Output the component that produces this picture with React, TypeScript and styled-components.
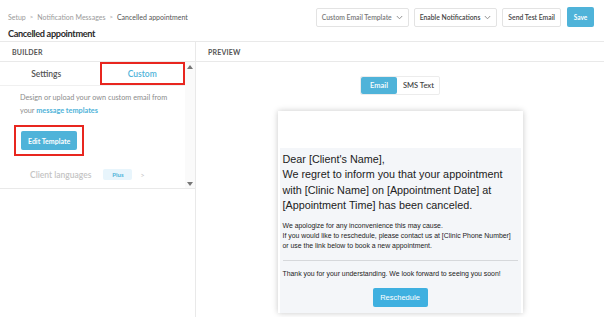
import React from "react";
import styled, { createGlobalStyle } from "styled-components";

const GlobalStyle = createGlobalStyle`
  html, body {
    margin: 0;
    padding: 0;
    height: 100%;
    overflow: hidden;
    background: #fff;
  }
  body {
    font-family: Lato, "Open Sans", sans-serif;
    color: #333;
  }
  #root {
    height: 100vh;
    display: flex;
    flex-direction: column;
  }
`;

const BLUE = "#4fb3d9";
const RED = "#e8261f";
const LINE = "#e9e9e9";

const Chevron = () => (
  <svg width="7" height="5" viewBox="0 0 7 5">
    <path d="M0.8 1 L3.5 3.8 L6.2 1" fill="none" stroke="#888" strokeWidth="0.9" />
  </svg>
);

export default function App() {
  return (
    <>
      <GlobalStyle />
      <Header>
        <TitleBlock>
          <Crumbs>
            <span>Setup</span>
            <Sep>&gt;</Sep>
            <span>Notification Messages</span>
            <Sep>&gt;</Sep>
            <Current>Cancelled appointment</Current>
          </Crumbs>
          <PageTitle>Cancelled appointment</PageTitle>
        </TitleBlock>
        <Actions>
          <SelectButton $muted>
            Custom Email Template <Chevron />
          </SelectButton>
          <SelectButton>
            Enable Notifications <Chevron />
          </SelectButton>
          <SelectButton>Send Test Email</SelectButton>
          <SaveButton>Save</SaveButton>
        </Actions>
      </Header>

      <Main>
        <Builder>
          <PanelHeader>Builder</PanelHeader>
          <ScrollArea>
            <ScrollContent>
              <Tabs>
                <Tab>Settings</Tab>
                <Tab $active $marked>
                  Custom
                </Tab>
              </Tabs>
              <Description>
                Design or upload your own custom email from
                <br />
                your <LinkText>message templates</LinkText>
              </Description>
              <EditMark>
                <EditButton>Edit Template</EditButton>
              </EditMark>
              <LangRow>
                <LangLabel>Client languages</LangLabel>
                <PlusBadge>Plus</PlusBadge>
                <Arrow>&gt;</Arrow>
              </LangRow>
            </ScrollContent>
            <ScrollBar>
              <ScrollArrow $up />
              <ScrollArrow />
            </ScrollBar>
          </ScrollArea>
        </Builder>

        <Preview>
          <PanelHeader>Preview</PanelHeader>
          <ToggleRow>
            <Toggle>
              <ToggleOption $active>Email</ToggleOption>
              <ToggleOption>SMS Text</ToggleOption>
            </Toggle>
          </ToggleRow>
          <EmailCard>
            <EmailTop />
            <EmailBody>
              <Lead>
                Dear [Client's Name],
                <br />
                We regret to inform you that your appointment with [Clinic Name] on [Appointment Date] at
                [Appointment Time] has been canceled.
              </Lead>
              <Small>
                We apologize for any inconvenience this may cause.
                <br />
                If you would like to reschedule, please contact us at [Clinic Phone Number]
                <br />
                or use the link below to book a new appointment.
              </Small>
              <Divider />
              <Small>Thank you for your understanding. We look forward to seeing you soon!</Small>
              <ButtonRow>
                <Reschedule>Reschedule</Reschedule>
              </ButtonRow>
            </EmailBody>
          </EmailCard>
        </Preview>
      </Main>
    </>
  );
}

const Header = styled.header`
  display: flex;
  justify-content: space-between;
  align-items: flex-start;
  padding: 7px 10px 0 8px;
  height: 42px;
  box-sizing: border-box;
  border-bottom: 1px solid ${LINE};
  flex-shrink: 0;
`;

const TitleBlock = styled.div`
  display: flex;
  flex-direction: column;
  padding-top: 5px;
`;

const Crumbs = styled.div`
  font-size: 7px;
  color: #9a9a9a;
  display: flex;
  align-items: center;
  gap: 4px;
  line-height: 10px;
`;

const Sep = styled.span`
  font-size: 6px;
`;

const Current = styled.span`
  color: #555;
`;

const PageTitle = styled.h1`
  margin: 5px 0 0;
  font-size: 9.2px;
  font-weight: 700;
  letter-spacing: -0.35px;
  color: #2b2b2b;
  line-height: 14px;
`;

const Actions = styled.div`
  display: flex;
  gap: 5px;
  align-items: center;
`;

const SelectButton = styled.button<{ $muted?: boolean }>`
  height: 19px;
  padding: 0 5px;
  border: 1px solid #e3e3e3;
  border-radius: 2px;
  background: #fff;
  font-family: inherit;
  font-size: 6.8px;
  font-weight: 600;
  color: ${({ $muted }) => ($muted ? "#777" : "#444")};
  display: flex;
  align-items: center;
  gap: 4px;
`;

const SaveButton = styled.button`
  height: 20px;
  width: 27px;
  margin-left: 1px;
  border: none;
  border-radius: 2px;
  background: ${BLUE};
  color: #fff;
  font-family: inherit;
  font-size: 6.5px;
  font-weight: 700;
`;

const Main = styled.main`
  flex: 1;
  display: grid;
  grid-template-columns: 196px 1fr;
  min-height: 0;
`;

const Builder = styled.section`
  border-right: 1px solid ${LINE};
  display: flex;
  flex-direction: column;
`;

const PanelHeader = styled.div`
  height: 20px;
  box-sizing: border-box;
  padding: 0 12px;
  display: flex;
  align-items: center;
  border-bottom: 1px solid ${LINE};
  font-size: 7px;
  font-weight: 700;
  letter-spacing: 0.2px;
  text-transform: uppercase;
  color: #555;
`;

const ScrollArea = styled.div`
  display: flex;
  height: 126px;
  border-bottom: 1px solid ${LINE};
`;

const ScrollContent = styled.div`
  flex: 1;
  display: flex;
  flex-direction: column;
  overflow: hidden;
`;

const Tabs = styled.div`
  display: grid;
  grid-template-columns: 1fr 1fr;
  height: 23px;
  border-bottom: 1px solid #f0f0f0;
`;

const Tab = styled.div<{ $active?: boolean; $marked?: boolean }>`
  display: flex;
  align-items: center;
  justify-content: center;
  font-size: 8.5px;
  font-weight: 600;
  color: ${({ $active }) => ($active ? BLUE : "#555")};
  border: 2px solid ${({ $marked }) => ($marked ? RED : "transparent")};
  margin-left: ${({ $marked }) => ($marked ? "7px" : "0")};
`;

const Description = styled.p`
  margin: 5px 0 0 20px;
  font-size: 7.3px;
  line-height: 13px;
  color: #8c8c8c;
`;

const LinkText = styled.span`
  color: ${BLUE};
  font-weight: 700;
`;

const EditMark = styled.div`
  align-self: flex-start;
  margin: 8px 0 0 14px;
  padding: 4px 5px;
  border: 2px solid ${RED};
`;

const EditButton = styled.button`
  height: 19px;
  padding: 0 7px;
  border: none;
  border-radius: 2px;
  background: ${BLUE};
  color: #fff;
  font-family: inherit;
  font-size: 7px;
  font-weight: 700;
  display: block;
`;

const LangRow = styled.div`
  display: flex;
  align-items: center;
  margin: 13px 0 0 30px;
`;

const LangLabel = styled.span`
  font-size: 8.5px;
  color: #c4c4c4;
  font-weight: 600;
`;

const PlusBadge = styled.span`
  margin-left: 12px;
  width: 29px;
  height: 11px;
  border-radius: 2px;
  background: #e8f5fc;
  color: ${BLUE};
  font-size: 6px;
  font-weight: 700;
  display: flex;
  align-items: center;
  justify-content: center;
`;

const Arrow = styled.span`
  margin-left: 8px;
  font-size: 7px;
  color: #c4c4c4;
`;

const ScrollBar = styled.div`
  width: 10px;
  background: #fafafa;
  display: flex;
  flex-direction: column;
  justify-content: space-between;
  align-items: center;
  padding: 3px 0 2px;
  box-sizing: border-box;
`;

const ScrollArrow = styled.span<{ $up?: boolean }>`
  width: 0;
  height: 0;
  border-left: 3.5px solid transparent;
  border-right: 3.5px solid transparent;
  ${({ $up }) => ($up ? "border-bottom: 4px solid #777;" : "border-top: 4px solid #777;")}
`;

const Preview = styled.section`
  display: flex;
  flex-direction: column;
  min-width: 0;
`;

const ToggleRow = styled.div`
  display: flex;
  justify-content: center;
  padding: 14px 0 16px;
`;

const Toggle = styled.div`
  display: flex;
  border: 1px solid #ececec;
  border-radius: 2px;
  height: 17px;
`;

const ToggleOption = styled.span<{ $active?: boolean }>`
  display: flex;
  align-items: center;
  padding: 0 ${({ $active }) => ($active ? "9.5px" : "5.5px")};
  font-size: 7.5px;
  font-weight: 600;
  background: ${({ $active }) => ($active ? BLUE : "#fff")};
  color: ${({ $active }) => ($active ? "#fff" : "#444")};
  border-radius: 2px;
`;

const EmailCard = styled.div`
  align-self: center;
  width: 245px;
  background: #fff;
  box-shadow: 0 0 6px rgba(0, 0, 0, 0.22);
`;

const EmailTop = styled.div`
  height: 37px;
`;

const EmailBody = styled.div`
  background: #f4f6f9;
  margin: 0 2px;
  padding: 4px 3px 6px;
  font-family: "Liberation Sans", Arial, sans-serif;
  color: #222;
`;

const Lead = styled.p`
  margin: 0;
  font-size: 10.8px;
  line-height: 15.3px;
`;

const Small = styled.p`
  margin: 0;
  font-size: 6.9px;
  line-height: 10px;
  padding-top: 8px;
  white-space: nowrap;
`;

const Divider = styled.hr`
  margin: 9px 0 0;
  border: none;
  border-top: 1px solid #d6d8db;
`;

const ButtonRow = styled.div`
  display: flex;
  justify-content: center;
  padding: 9px 0 0;
`;

const Reschedule = styled.button`
  width: 55px;
  height: 19px;
  border: none;
  border-radius: 2px;
  background: #3fb0e0;
  color: #fff;
  font-family: "Liberation Sans", Arial, sans-serif;
  font-size: 7.5px;
`;
